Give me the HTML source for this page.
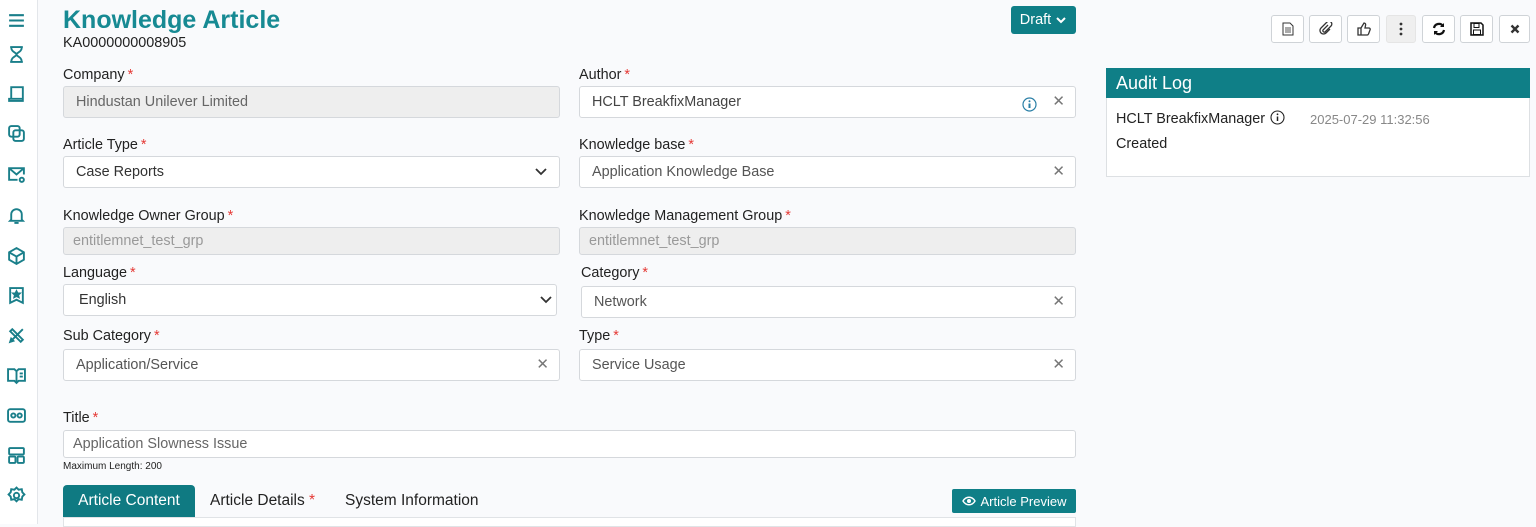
<!DOCTYPE html>
<html><head><meta charset="utf-8"><style>
*{box-sizing:border-box;margin:0;padding:0}
body{width:1536px;height:524px;overflow:hidden;background:#f9fafc;font-family:"Liberation Sans",sans-serif;color:#222;position:relative}
.a{position:absolute}
.side{left:0;top:0;width:38px;height:524px;background:#fff;border-right:1px solid #e3e6ea}
.ic{position:absolute;left:7px;width:19px;height:19px}
.lbl{position:absolute;font-size:14.4px;color:#222}
.lbl b{color:#e53935;font-weight:normal;margin-left:3px}
.in{position:absolute;background:#fff;border:1px solid #d5d8dc;border-radius:3px;font-size:14.4px;color:#555;padding-left:12px;display:flex;align-items:center}
.dis{background:#eeeeee;color:#666}
.x{position:absolute;right:10px;top:50%;transform:translateY(-55%);color:#777;font-size:15px}
.chev{position:absolute;right:12px;top:50%;transform:translateY(-50%)}
.tb{position:absolute;top:15px;height:28px;background:#fff;border:1px solid #cfd3d7;border-radius:3px;display:flex;align-items:center;justify-content:center}
</style></head><body>
<div class="a side">
<svg class="ic" style="top:11px" viewBox="0 0 18 18" stroke="#1a7f8a" stroke-width="2" fill="none"><path d="M2 4h14M2 9h14M2 14h14"/></svg>
<svg class="ic" style="top:45px" viewBox="0 0 18 18" stroke="#1a7f8a" stroke-width="1.8" fill="none"><path d="M3 2h12M3 16h12M4 2c0 5 5 5 5 7s-5 2-5 7M14 2c0 5-5 5-5 7s5 2 5 7"/></svg>
<svg class="ic" style="top:84px" viewBox="0 0 18 18" stroke="#1a7f8a" stroke-width="1.8" fill="none"><path d="M4 14V3h11v11M2 14h13v2H2z"/></svg>
<svg class="ic" style="top:124px" viewBox="0 0 18 18" stroke="#1a7f8a" stroke-width="1.8" fill="none"><rect x="2" y="2" width="10" height="10" rx="2"/><rect x="6" y="6" width="10" height="10" rx="2"/></svg>
<svg class="ic" style="top:165px" viewBox="0 0 18 18" stroke="#1a7f8a" stroke-width="1.8" fill="none"><path d="M10 14H2V3h14v6M2 3l7 6 7-6"/><circle cx="14" cy="14" r="2"/></svg>
<svg class="ic" style="top:206px" viewBox="0 0 18 18" stroke="#1a7f8a" stroke-width="1.8" fill="none"><path d="M4 13V8a5 5 0 0110 0v5l1 1H3zM7 16h4"/></svg>
<svg class="ic" style="top:246px" viewBox="0 0 18 18" stroke="#1a7f8a" stroke-width="1.8" fill="none"><path d="M9 2l7 4v7l-7 4-7-4V6zM2 6l7 4 7-4M9 10v7"/></svg>
<svg class="ic" style="top:286px" viewBox="0 0 18 18" stroke="#1a7f8a" stroke-width="1.8" fill="none"><path d="M3 2h12v14l-6-3-6 3z"/><path d="M9 5l1 2h2l-1.5 1.5.5 2-2-1-2 1 .5-2L6 7h2z" fill="#1a7f8a"/></svg>
<svg class="ic" style="top:326px" viewBox="0 0 18 18" stroke="#1a7f8a" stroke-width="1.8" fill="none"><path d="M3 15L15 3M5 3l10 10-2 2L3 5zM3 15l3-1-2-2z"/></svg>
<svg class="ic" style="top:366px" viewBox="0 0 18 18" stroke="#1a7f8a" stroke-width="1.8" fill="none"><path d="M1 3h6l2 2 2-2h6v11h-6l-2 2-2-2H1zM9 5v11M12 7h3M12 10h3"/></svg>
<svg class="ic" style="top:406px" viewBox="0 0 18 18" stroke="#1a7f8a" stroke-width="1.8" fill="none"><rect x="1" y="3" width="16" height="12" rx="2"/><circle cx="6" cy="9" r="2"/><circle cx="12" cy="9" r="2"/></svg>
<svg class="ic" style="top:446px" viewBox="0 0 18 18" stroke="#1a7f8a" stroke-width="1.8" fill="none"><rect x="2" y="2" width="14" height="6" rx="1"/><rect x="2" y="10" width="6" height="6" rx="1"/><rect x="10" y="10" width="6" height="6" rx="1"/></svg>
<svg class="ic" style="top:486px" viewBox="0 0 18 18" stroke="#1a7f8a" stroke-width="1.8" fill="none"><circle cx="9" cy="9" r="2.5"/><path d="M9 1.5l2 2 3-.5.5 3 2 2-2 2-.5 3-3-.5-2 2-2-2-3 .5-.5-3-2-2 2-2 .5-3 3 .5z"/></svg>
</div>

<div class="a" style="left:63px;top:6px;font-size:25px;font-weight:bold;color:#178a93">Knowledge Article</div>
<div class="a" style="left:63px;top:35px;font-size:14.4px;color:#222">KA0000000008905</div>
<div class="a" style="left:1011px;top:6px;width:65px;height:28px;background:#0f7f87;border-radius:3px;color:#fff;font-size:14.5px;display:flex;align-items:center;justify-content:center">Draft <svg width="12" height="10" viewBox="0 0 12 10" style="margin-left:4px"><path d="M2 3l4 4 4-4" stroke="#fff" stroke-width="2" fill="none"/></svg></div>

<div class="lbl" style="left:63px;top:67px">Company<b>*</b></div>
<div class="in dis" style="left:63px;top:86px;width:497px;height:32px">Hindustan Unilever Limited</div>
<div class="lbl" style="left:579px;top:67px">Author<b>*</b></div>
<div class="in" style="left:579px;top:86px;width:497px;height:32px;color:#444">HCLT BreakfixManager<svg class="a" style="left:442px;top:10px" width="15" height="15" viewBox="0 0 15 15"><circle cx="7.5" cy="7.5" r="6.5" stroke="#2a7fa6" stroke-width="1.2" fill="none"/><path d="M7.5 6.5v4.5" stroke="#2a7fa6" stroke-width="2"/><circle cx="7.5" cy="4.3" r="1" fill="#2a7fa6"/></svg><span class="x">✕</span></div>

<div class="lbl" style="left:63px;top:137px">Article Type<b>*</b></div>
<div class="in" style="left:63px;top:156px;width:497px;height:32px;color:#333">Case Reports<svg class="chev" width="12" height="8" viewBox="0 0 12 8"><path d="M1 1l5 5 5-5" stroke="#333" stroke-width="1.8" fill="none"/></svg></div>
<div class="lbl" style="left:579px;top:137px">Knowledge base<b>*</b></div>
<div class="in" style="left:579px;top:156px;width:497px;height:32px">Application Knowledge Base<span class="x">✕</span></div>

<div class="lbl" style="left:63px;top:208px">Knowledge Owner Group<b>*</b></div>
<div class="in dis" style="left:63px;top:227px;width:497px;height:28px;padding-left:9px;color:#999">entitlemnet_test_grp</div>
<div class="lbl" style="left:579px;top:208px">Knowledge Management Group<b>*</b></div>
<div class="in dis" style="left:579px;top:227px;width:497px;height:28px;padding-left:9px;color:#999">entitlemnet_test_grp</div>

<div class="lbl" style="left:63px;top:265px">Language<b>*</b></div>
<div class="in" style="left:63px;top:284px;width:494px;height:32px;padding-left:15px;color:#333">English<svg class="chev" style="right:4px" width="12" height="8" viewBox="0 0 12 8"><path d="M1 1l5 5 5-5" stroke="#333" stroke-width="1.8" fill="none"/></svg></div>
<div class="lbl" style="left:581px;top:265px">Category<b>*</b></div>
<div class="in" style="left:581px;top:286px;width:495px;height:32px">Network<span class="x">✕</span></div>

<div class="lbl" style="left:63px;top:328px">Sub Category<b>*</b></div>
<div class="in" style="left:63px;top:349px;width:497px;height:32px">Application/Service<span class="x">✕</span></div>
<div class="lbl" style="left:579px;top:328px">Type<b>*</b></div>
<div class="in" style="left:579px;top:349px;width:497px;height:32px">Service Usage<span class="x">✕</span></div>

<div class="lbl" style="left:63px;top:410px">Title<b>*</b></div>
<div class="in" style="left:63px;top:430px;width:1013px;height:28px;padding-left:9px;color:#666">Application Slowness Issue</div>
<div class="a" style="left:63px;top:461px;font-size:10px;color:#222">Maximum Length: 200</div>

<div class="a" style="left:63px;top:485px;width:132px;height:32px;background:#0f7a82;border-radius:4px 4px 0 0;color:#fff;font-size:15.5px;display:flex;align-items:center;justify-content:center">Article Content</div>
<div class="a" style="left:210px;top:492px;font-size:15.5px">Article Details<span style="color:#e53935"> *</span></div>
<div class="a" style="left:345px;top:492px;font-size:15.5px">System Information</div>
<div class="a" style="left:952px;top:489px;width:124px;height:24px;background:#0f7f87;border-radius:2px;color:#fff;font-size:13px;display:flex;align-items:center;justify-content:center"><svg width="14" height="12" viewBox="0 0 14 12" style="margin-right:5px"><path d="M1 6c3-5 9-5 12 0-3 5-9 5-12 0z" stroke="#fff" stroke-width="1.4" fill="none"/><circle cx="7" cy="6" r="2" fill="#fff"/></svg>Article Preview</div>
<div class="a" style="left:63px;top:517px;width:1013px;height:10px;background:#fff;border:1px solid #e0e3e6"></div>

<div class="tb" style="left:1271px;width:33px"><svg width="12" height="14" viewBox="0 0 12 14"><path d="M1 1h7l3 3v9H1z" stroke="#333" fill="#fff"/><path d="M3 6h6M3 8h6M3 10h6" stroke="#555"/></svg></div>
<div class="tb" style="left:1309px;width:33px"><svg width="14" height="14" viewBox="0 0 14 14"><path d="M9 3L4 8a1.5 1.5 0 002 2l6-6a2.5 2.5 0 00-4-4L2 6a3.5 3.5 0 005 5l4-4" stroke="#333" stroke-width="1.3" fill="none"/></svg></div>
<div class="tb" style="left:1347px;width:33px"><svg width="14" height="14" viewBox="0 0 14 14"><path d="M1 6h3v7H1zM4 6l3-5c1 0 2 1 1.5 2.5L8 6h4c1 0 1.5 1 1 2l-1.5 4c-.3.7-1 1-1.5 1H4" stroke="#333" stroke-width="1.3" fill="none"/></svg></div>
<div class="tb" style="left:1386px;width:30px;background:#efefef;border-color:#e5e5e5"><svg width="4" height="14" viewBox="0 0 4 14"><circle cx="2" cy="2" r="1.4" fill="#333"/><circle cx="2" cy="7" r="1.4" fill="#333"/><circle cx="2" cy="12" r="1.4" fill="#333"/></svg></div>
<div class="tb" style="left:1422px;width:33px"><svg width="14" height="14" viewBox="0 0 14 14"><path d="M2 6a5 5 0 019-2M12 8a5 5 0 01-9 2" stroke="#111" stroke-width="2.2" fill="none"/><path d="M12 1v4H8zM2 13V9h4z" fill="#111"/></svg></div>
<div class="tb" style="left:1460px;width:33px"><svg width="14" height="14" viewBox="0 0 14 14"><path d="M1 1h10l2 2v10H1z" stroke="#111" stroke-width="1.5" fill="none"/><rect x="4" y="1.5" width="5" height="4" stroke="#111" fill="none"/><rect x="3.5" y="8" width="7" height="4.5" stroke="#111" fill="none"/></svg></div>
<div class="tb" style="left:1499px;width:31px"><svg width="10" height="10" viewBox="0 0 10 10"><path d="M1.5 1.5l7 7M8.5 1.5l-7 7" stroke="#333" stroke-width="2.4"/></svg></div>

<div class="a" style="left:1106px;top:68px;width:424px;height:109px;background:#fff;border:1px solid #dde0e3"></div>
<div class="a" style="left:1106px;top:68px;width:424px;height:30px;background:#0f7f87;color:#fff;font-size:18px;padding-left:10px;line-height:30px">Audit Log</div>
<div class="a" style="left:1116px;top:111px;font-size:14.4px">HCLT BreakfixManager</div>
<svg class="a" style="left:1270px;top:110px" width="15" height="15" viewBox="0 0 15 15"><circle cx="7.5" cy="7.5" r="6.5" stroke="#222" stroke-width="1.1" fill="none"/><path d="M7.5 6.5v4.5" stroke="#222" stroke-width="1.5"/><circle cx="7.5" cy="4.3" r=".9" fill="#222"/></svg>
<div class="a" style="left:1310px;top:112px;font-size:13px;color:#888">2025-07-29 11:32:56</div>
<div class="a" style="left:1116px;top:136px;font-size:14.4px">Created</div>
</body></html>
